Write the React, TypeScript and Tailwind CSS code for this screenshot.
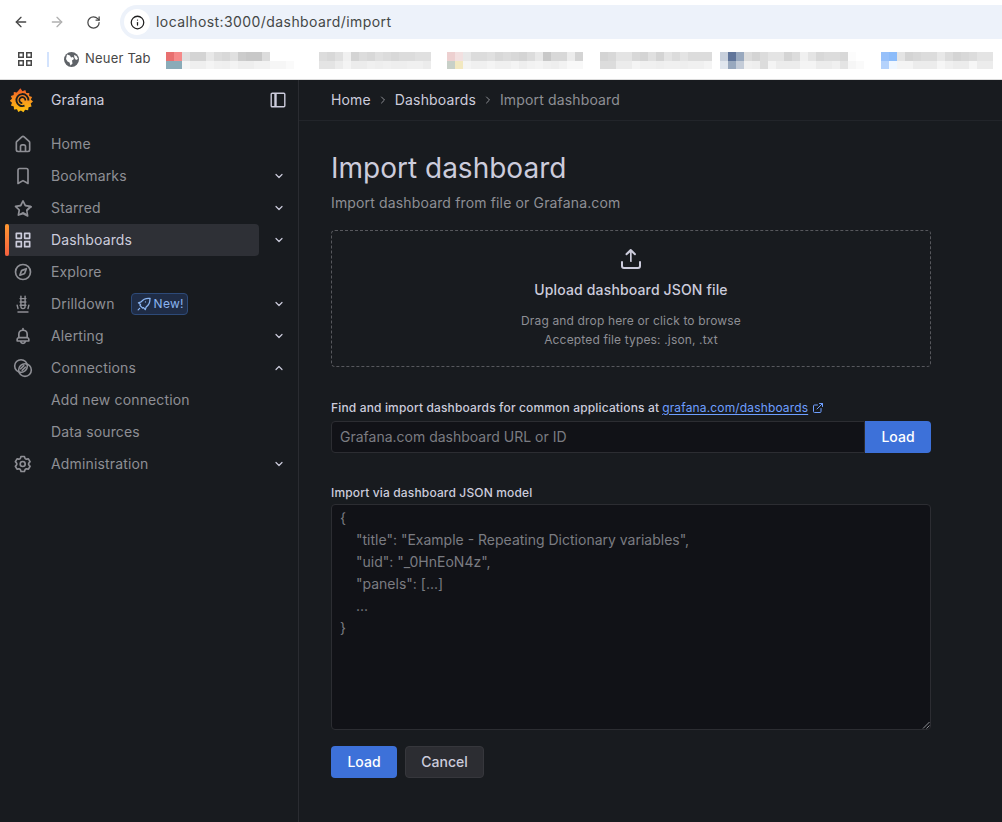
import React from "react";
import { ArrowLeft, ArrowRight, RotateCw, Info, ChevronDown, ChevronUp, ChevronRight, ExternalLink } from "lucide-react";

const mosaics: { x: number; top: string[]; bottom: string[] }[] = [
  { x: 166, top: ["#e87070", "#f58a8a", "#e0e0e0", "#d4d4d4", "#d4d4d4", "#e8e8e8", "#dcdcdc", "#d8d8d8", "#e0e0e0", "#cccccc", "#c8c8c8", "#c8c8c8", "#dcdcdc", "#ffffff", "#ffffff", "#ffffff", "#ffffff"], bottom: ["#8aabb8", "#8aabb8", "#f5f5f5", "#efefef", "#efefef", "#f4f4f4", "#f0f0f0", "#efefef", "#f3f3f3", "#eeeeee", "#eeeeee", "#f2f2f2", "#f2f2f2", "#f6f6f6", "#f6f6f6", "#fafafa", "#ffffff"] },
  { x: 319, top: ["#dcdcdc", "#d8d8d8", "#e0e0e0", "#f0f0f0", "#d4d4d4", "#dcdcdc", "#d8d8d8", "#e0e0e0", "#dcdcdc", "#d8d8d8", "#dcdcdc", "#dcdcdc", "#e0e0e0", "#e0e0e0"], bottom: ["#e4e4e4", "#e4e4e4", "#ececec", "#f4f4f4", "#ececec", "#ececec", "#f0f0f0", "#eeeeee", "#f0f0f0", "#eeeeee", "#eeeeee", "#f0f0f0", "#f0f0f0", "#ececec"] },
  { x: 447, top: ["#edd0d0", "#f2e0e0", "#e8e8e8", "#dcdcdc", "#dcdcdc", "#e0e0e0", "#d8d8d8", "#dcdcdc", "#d8d8d8", "#d4d4d4", "#dcdcdc", "#e8e8e8", "#c8c8c8", "#d8d8d8", "#d8d8d8", "#ececec", "#d4d4d4"], bottom: ["#c8d0c8", "#f2e8c0", "#f4f4f4", "#f0f0f0", "#f0f0f0", "#f4f4f4", "#f0f0f0", "#f0f0f0", "#f4f4f4", "#eeeeee", "#f2f2f2", "#f4f4f4", "#f0f0f0", "#eeeeee", "#f2f2f2", "#f8f8f8", "#f8f8f8"] },
  { x: 600, top: ["#d4d4d4", "#d8d8d8", "#e4e4e4", "#e4e4e4", "#d8d8d8", "#d4d4d4", "#e0e0e0", "#d4d4d4", "#e4e4e4", "#dcdcdc", "#e4e4e4", "#dcdcdc", "#dcdcdc", "#dcdcdc"], bottom: ["#dcdcdc", "#dcdcdc", "#ececec", "#ececec", "#f4f4f4", "#f0f0f0", "#f0f0f0", "#eeeeee", "#f0f0f0", "#f0f0f0", "#eeeeee", "#f0f0f0", "#f0f0f0", "#f4f4f4"] },
  { x: 720, top: ["#c8d0dc", "#60759a", "#98a8be", "#dcdcdc", "#d4d4d4", "#dcdcdc", "#e4e4e4", "#e4e4e4", "#d4d4d4", "#dcdcdc", "#f0f0f0", "#e4e4e4", "#d8d8d8", "#dcdcdc", "#dcdcdc", "#d8d8d8", "#fcfcfc", "#ffffff"], bottom: ["#e0e6ee", "#98a8be", "#c4ccd8", "#f0f0f0", "#eeeeee", "#dcdcdc", "#f4f4f4", "#ececec", "#ececec", "#ececec", "#f4f4f4", "#f4f4f4", "#ececec", "#ececec", "#f0f0f0", "#e4e4e4", "#f6f6f6", "#fafafa"] },
  { x: 881, top: ["#96c0fa", "#8cbcfa", "#e4e4e4", "#d4d4d4", "#d8d8d8", "#dcdcdc", "#dcdcdc", "#e8e8e8", "#dcdcdc", "#d4d4d4", "#d8d8d8", "#dcdcdc", "#e4e4e4", "#e4e4e4"], bottom: ["#b4d2fc", "#f0f7ff", "#f4f4f4", "#f4f4f4", "#ececec", "#ececec", "#ececec", "#f6f6f6", "#f0f0f0", "#ececec", "#ececec", "#f6f6f6", "#ececec", "#ececec"] },
];

function Mosaic({ m }: { m: (typeof mosaics)[number] }) {
  return (
    <svg width={m.top.length * 8} height={17} className="block shrink-0" style={{ marginLeft: m.x }}>
      {m.top.map((c, i) => (
        <rect key={i} x={i * 8} y={0} width={8} height={9} fill={c} />
      ))}
      {m.bottom.map((c, i) => (
        <rect key={i} x={i * 8} y={9} width={8} height={8} fill={c} />
      ))}
    </svg>
  );
}

const GrafanaLogo = () => (
  <svg width="24" height="26" viewBox="0 0 24 26" className="shrink-0">
    <defs>
      <linearGradient id="gf" x1="0.5" y1="1" x2="0.5" y2="0">
        <stop offset="0" stopColor="#fdc10e" />
        <stop offset="0.45" stopColor="#f99a1c" />
        <stop offset="1" stopColor="#f05a28" />
      </linearGradient>
    </defs>
    <path
      fill="url(#gf)"
      d="M10.4 1.2l2 3 2.9-1.1 1 3 3-.2-.1 3 2.9 1-1.3 2.7 2.2 2-2.3 2 .9 2.9-3 .7-.5 3-3-.5-1.7 2.5-2.5-1.7-2.6 1.500-1.300-2.700-3 .2-.2-3-2.900-.9 1.100-2.800-2.200-2.100 2.200-2-1.200-2.800 2.900-.9.1-3 3 .4z"
    />
    <path d="M18.4 13.500A6 6 0 1 0 14.500 18.700" fill="none" stroke="#181b1f" strokeWidth="1.9" />
    <path d="M15.300 13.500A3 3 0 1 0 12.300 16.100" fill="none" stroke="#181b1f" strokeWidth="1.700" />
  </svg>
);

const ico = { viewBox: "0 0 24 24", fill: "currentColor", width: 20, height: 20 } as const;
const HomeIcon = () => (
  <svg {...ico}>
    <path d="M20 8 14 2.74a3 3 0 0 0-4 0L4 8a3 3 0 0 0-1 2.26V19a3 3 0 0 0 3 3h12a3 3 0 0 0 3-3v-8.75A3 3 0 0 0 20 8Zm-6 12h-4v-5a1 1 0 0 1 1-1h2a1 1 0 0 1 1 1Zm5-1a1 1 0 0 1-1 1h-2v-5a3 3 0 0 0-3-3h-2a3 3 0 0 0-3 3v5H6a1 1 0 0 1-1-1v-8.75a1 1 0 0 1 .34-.75l6-5.25a1 1 0 0 1 1.32 0l6 5.25a1 1 0 0 1 .34.75Z" />
  </svg>
);
const BookmarkIcon = () => (
  <svg {...ico}>
    <path d="M16 2H8a3 3 0 0 0-3 3v16a1 1 0 0 0 1.5.87L12 18.69l5.5 3.18A1 1 0 0 0 19 21V5a3 3 0 0 0-3-3Zm1 17.27-4.5-2.6a1 1 0 0 0-1 0L7 19.27V5a1 1 0 0 1 1-1h8a1 1 0 0 1 1 1Z" />
  </svg>
);
const StarIcon = () => (
  <svg {...ico}>
    <path d="M22 9.67a1 1 0 0 0-.86-.67l-5.69-.83L12.9 3a1 1 0 0 0-1.8 0L8.55 8.16 2.86 9a1 1 0 0 0-.81.68 1 1 0 0 0 .25 1l4.13 4-1 5.68a1 1 0 0 0 1.45 1.07L12 19.76l5.1 2.68a.93.93 0 0 0 .46.12 1 1 0 0 0 .59-.19 1 1 0 0 0 .4-1l-1-5.68 4.13-4A1 1 0 0 0 22 9.67Zm-6.15 4a1 1 0 0 0-.29.89l.72 4.19-3.76-2a1 1 0 0 0-.94 0l-3.76 2 .72-4.19a1 1 0 0 0-.29-.89l-3-3 4.21-.61a1 1 0 0 0 .76-.55L12 5.7l1.88 3.82a1 1 0 0 0 .76.55l4.21.61Z" />
  </svg>
);
const AppsIcon = () => (
  <svg {...ico}>
    <path d="M10 13H4a1 1 0 0 0-1 1v6a1 1 0 0 0 1 1h6a1 1 0 0 0 1-1v-6a1 1 0 0 0-1-1Zm-1 6H5v-4h4ZM20 3h-6a1 1 0 0 0-1 1v6a1 1 0 0 0 1 1h6a1 1 0 0 0 1-1V4a1 1 0 0 0-1-1Zm-1 6h-4V5h4Zm1 4h-6a1 1 0 0 0-1 1v6a1 1 0 0 0 1 1h6a1 1 0 0 0 1-1v-6a1 1 0 0 0-1-1Zm-1 6h-4v-4h4ZM10 3H4a1 1 0 0 0-1 1v6a1 1 0 0 0 1 1h6a1 1 0 0 0 1-1V4a1 1 0 0 0-1-1ZM9 9H5V5h4Z" />
  </svg>
);
const CompassIcon = () => (
  <svg {...ico}>
    <path d="M12 2a10 10 0 1 0 10 10A10 10 0 0 0 12 2Zm0 18a8 8 0 1 1 8-8 8 8 0 0 1-8 8Z" />
    <path d="M15.6 7.1 10.4 9a2 2 0 0 0-1.2 1.2l-1.9 5.3a1 1 0 0 0 1.3 1.3l5.2-1.9a2 2 0 0 0 1.2-1.2l1.9-5.3a1 1 0 0 0-1.3-1.3Zm-2.4 5.8a.5.5 0 0 1-.3.3l-3 1.1 1.1-3a.5.5 0 0 1 .3-.3l3-1.1Z" />
  </svg>
);
const DrillIcon = () => (
  <svg width="20" height="20" viewBox="0 0 24 24" fill="none" stroke="currentColor" strokeWidth="1.7" strokeLinecap="round">
    <path d="M6 21.500h12" />
    <path d="M8.500 5.500h7M8.500 9.500h7M8.500 13.500h7" />
    <path d="M9.500 2.500v12.500a2.500 2.500 0 0 0 5 0V2.500" />
    <path d="M5 13.500l1 4M19 13.500l-1 4" />
  </svg>
);
const BellIcon = () => (
  <svg {...ico}>
    <path d="M18 13.18V10a6 6 0 0 0-5-5.91V3a1 1 0 0 0-2 0v1.09A6 6 0 0 0 6 10v3.18A3 3 0 0 0 4 16v2a1 1 0 0 0 1 1h3.14a4 4 0 0 0 7.72 0H19a1 1 0 0 0 1-1v-2a3 3 0 0 0-2-2.82ZM8 10a4 4 0 0 1 8 0v3H8Zm4 10a2 2 0 0 1-1.72-1h3.44A2 2 0 0 1 12 20Zm6-3H6v-1a1 1 0 0 1 1-1h10a1 1 0 0 1 1 1Z" />
  </svg>
);
const ConnIcon = () => (
  <svg width="20" height="20" viewBox="0 0 24 24" fill="none" stroke="currentColor" strokeWidth="1.9">
    <circle cx="9.6" cy="9.6" r="7.6" />
    <circle cx="14.4" cy="14.4" r="7.6" />
    <path d="M8.5 13.5l5-5M10.5 15.5l5-5" />
  </svg>
);
const CogIcon = () => (
  <svg {...ico}>
    <path d="M19.9 12.66a1 1 0 0 1 0-1.32l1.28-1.44a1 1 0 0 0 .12-1.17l-2-3.46a1 1 0 0 0-1.07-.48l-1.88.38a1 1 0 0 1-1.15-.66l-.61-1.83a1 1 0 0 0-.95-.68h-4a1 1 0 0 0-1 .68l-.56 1.83a1 1 0 0 1-1.15.66L5 4.79a1 1 0 0 0-1 .48L2 8.73a1 1 0 0 0 .1 1.17l1.27 1.44a1 1 0 0 1 0 1.32L2.1 14.1a1 1 0 0 0-.1 1.17l2 3.46a1 1 0 0 0 1.07.48l1.88-.38a1 1 0 0 1 1.15.66l.61 1.83a1 1 0 0 0 1 .68h4a1 1 0 0 0 .95-.68l.61-1.83a1 1 0 0 1 1.15-.66l1.88.38a1 1 0 0 0 1.07-.48l2-3.46a1 1 0 0 0-.12-1.17ZM18.41 14l.8.9-1.28 2.22-1.18-.24a3 3 0 0 0-3.45 2L12.92 20h-2.56L10 18.86a3 3 0 0 0-3.45-2l-1.18.24-1.3-2.21.8-.9a3 3 0 0 0 0-4l-.8-.9 1.28-2.2 1.18.24a3 3 0 0 0 3.45-2L10.36 4h2.56l.38 1.14a3 3 0 0 0 3.45 2l1.18-.24 1.28 2.22-.8.9a3 3 0 0 0 0 3.98Zm-6.77-6a4 4 0 1 0 4 4 4 4 0 0 0-4-4Zm0 6a2 2 0 1 1 2-2 2 2 0 0 1-2 2Z" />
  </svg>
);
const RocketIcon = () => (
  <svg width="14" height="14" viewBox="0 0 24 24" fill="none" stroke="currentColor" strokeWidth="2.2" strokeLinejoin="round" strokeLinecap="round" className="shrink-0">
    <path d="M22.5 2.5c-6.5-.8-12 1.2-15.5 6L2.5 10l3.5 3-.8 1.6 4.4 4.4 1.6-.8 3 3.5 1.5-4.5c4.800-3.500 7-8.500 6.300-14.700Z" />
    <path d="M14.500 8.500h.01" />
    <path d="M2 22l2.500-2.500" />
  </svg>
);

const items: { label: string; icon: React.ReactNode; chevron?: "down" | "up"; active?: boolean; badge?: boolean }[] = [
  { label: "Home", icon: <HomeIcon /> },
  { label: "Bookmarks", icon: <BookmarkIcon />, chevron: "down" },
  { label: "Starred", icon: <StarIcon />, chevron: "down" },
  { label: "Dashboards", icon: <AppsIcon />, chevron: "down", active: true },
  { label: "Explore", icon: <CompassIcon /> },
  { label: "Drilldown", icon: <DrillIcon />, chevron: "down", badge: true },
  { label: "Alerting", icon: <BellIcon />, chevron: "down" },
  { label: "Connections", icon: <ConnIcon />, chevron: "up" },
  { label: "Add new connection", icon: null },
  { label: "Data sources", icon: null },
  { label: "Administration", icon: <CogIcon />, chevron: "down" },
];

function NavRow({ item }: { item: (typeof items)[number] }) {
  return (
    <div className="flex h-8 items-center">
      <div className={`ml-[5px] flex h-8 w-[254px] items-center rounded-r-sm ${item.active ? "bg-[#2e3036] text-[#ccccdc]" : "text-[#8e8f95]"}`}>
        <div className={`h-8 w-1 shrink-0 rounded-sm ${item.active ? "bg-gradient-to-b from-[#ff9830] to-[#f55f3e]" : ""}`} />
        <div className="w-1 shrink-0" />
        <div className="flex w-[38px] shrink-0 items-center">{item.icon}</div>
        <span className="text-sm leading-none tracking-[0.15px]">{item.label}</span>
        {item.badge && (
          <span className="ml-[16px] flex h-[22px] w-[57px] items-center gap-[3px] rounded-sm border border-[#2d4a78] bg-[#1f2c45] pl-[5px] text-xs tracking-[0.3px] text-[#8ab4f0]">
            <RocketIcon />New!
          </span>
        )}
      </div>
      <div className="flex flex-1 items-center justify-center text-[#ccccdc]">
        {item.chevron === "down" && <ChevronDown size={12} strokeWidth={2.4} />}
        {item.chevron === "up" && <ChevronUp size={12} strokeWidth={2.4} />}
      </div>
    </div>
  );
}

export default function App() {
  return (
    <div className="flex h-[822px] w-[1002px] flex-col overflow-hidden bg-[#181b1f] text-[#ccccdc] [font-family:Inter,'Liberation_Sans',sans-serif]">
      {/* browser chrome */}
      <div className="relative h-[80px] shrink-0 border-b border-[#dcdcdc] bg-white">
        <div className="flex h-[44px] items-center">
          <div className="flex w-[120px] shrink-0 items-center pl-[13px] text-[#474747]">
            <ArrowLeft size={16} strokeWidth={2} />
            <ArrowRight size={16} strokeWidth={2} className="ml-[20px] text-[#b0b0b0]" />
            <RotateCw size={15} strokeWidth={2} className="ml-[21px]" />
          </div>
          <div className="flex h-[34px] flex-1 items-center rounded-l-[17px] bg-[#edf2fa] pl-[4px]">
            <div className="flex h-[26px] w-[26px] items-center justify-center rounded-full bg-white text-[#1f1f1f]">
              <Info size={15} strokeWidth={2} />
            </div>
            <span className="ml-[6px] text-sm tracking-[0.42px] text-[#444746]">localhost:3000/dashboard/import</span>
          </div>
        </div>
        <div className="flex h-[30px] items-center pl-[17px]">
          <svg width="16" height="16" viewBox="0 0 16 16" fill="none" stroke="#474747" strokeWidth="1.5">
            <rect x="1.75" y="1.75" width="4.5" height="4.5" />
            <rect x="9.75" y="1.75" width="4.5" height="4.5" />
            <rect x="1.75" y="9.75" width="4.5" height="4.5" />
            <rect x="9.75" y="9.75" width="4.5" height="4.5" />
          </svg>
          <div className="ml-[14px] h-[15px] w-[2px] bg-[#d3e3fd]" />
          <svg width="15" height="15" viewBox="0 0 15 15" className="ml-[15px]">
            <circle cx="7.5" cy="7.5" r="7.5" fill="#5f6368" />
            <path d="M3 2.5l3 1 1 2 2-.5 1 2-2 1.5.5 3-2 2-1-3-2-1-1.5-2.5zM10 3l2.5 1 1.500 3-2 1-1.500-2z" fill="#ffffff" />
          </svg>
          <span className="ml-[6px] text-[13px] tracking-[0.2px] text-[#474747]">Neuer Tab</span>
        </div>
        {mosaics.map((m) => (
          <div key={m.x} className="absolute left-0 top-[52px]"><Mosaic m={m} /></div>
        ))}
      </div>

      <div className="flex flex-1">
        {/* sidebar */}
        <aside className="w-[299px] shrink-0 border-r border-[#2a2c31]">
          <div className="flex h-10 items-center pl-[10px] pr-[12px]">
            <GrafanaLogo />
            <span className="ml-[17px] flex-1 text-sm tracking-[0.15px] text-[#ccccdc]">Grafana</span>
            <svg width="16" height="16" viewBox="0 0 16 16" fill="none" stroke="#ccccdc" strokeWidth="1.4">
              <rect x="1.2" y="1.2" width="13.6" height="13.6" rx="1" />
              <path d="M5.5 1.5v13" strokeWidth="2.4" />
            </svg>
          </div>
          <nav className="pt-2">
            {items.map((it) => <NavRow key={it.label} item={it} />)}
          </nav>
        </aside>

        {/* main */}
        <main className="flex-1">
          <div className="flex h-[41px] items-center gap-[5px] border-b border-[#22252a] pl-[32px] text-sm tracking-[0.15px]">
            <span className="text-[#ccccdc]">Home</span>
            <ChevronRight size={12} className="mx-[1px] text-[#8e8f95]" />
            <span className="text-[#ccccdc]">Dashboards</span>
            <ChevronRight size={12} className="mx-[1px] text-[#8e8f95]" />
            <span className="text-[#8e8f95]">Import dashboard</span>
          </div>
          <div className="ml-[32px] w-[600px]">
            <h1 className="mt-[30px] text-[28px] leading-[34px] font-normal text-[#ccccdc]">Import dashboard</h1>
            <p className="mt-[9px] text-sm leading-[18px] tracking-[0.15px] text-[#8e8f95]">Import dashboard from file or Grafana.com</p>

            <div className="mt-[18px] flex h-[137px] w-[600px] flex-col items-center rounded-sm border border-dashed border-[#57585d]">
              <svg width="24" height="24" viewBox="0 0 24 24" fill="#ccccdc" className="mt-[16px]">
                <path d="M21 14a1 1 0 0 0-1 1v4a1 1 0 0 1-1 1H5a1 1 0 0 1-1-1v-4a1 1 0 0 0-2 0v4a3 3 0 0 0 3 3h14a3 3 0 0 0 3-3v-4a1 1 0 0 0-1-1Zm-9.7.7a1 1 0 0 0 1.4 0l0 0V5.41l2.600 2.600a1 1 0 0 0 1.400-1.420l-4.300-4.300a1 1 0 0 0-1.400 0L6.700 6.600A1 1 0 0 0 8.100 8l2.900-2.600V14a1 1 0 0 0 .3.7Z" />
              </svg>
              <span className="mt-[8px] text-sm font-medium leading-[22px] tracking-[0.15px] text-[#ccccdc]">Upload dashboard JSON file</span>
              <span className="mt-[11px] text-xs leading-[18px] tracking-[0.15px] text-[#8e8f95]">Drag and drop here or click to browse</span>
              <span className="text-xs leading-[20px] tracking-[0.15px] text-[#8e8f95]">Accepted file types: .json, .txt</span>
            </div>

            <div className="mt-[32px] flex items-center text-xs font-medium leading-[18px] tracking-[0.15px] text-[#ccccdc]">
              <span>Find and import dashboards for common applications at</span>
              <span className="ml-[3px] font-normal text-[#6e9fff] underline underline-offset-2">grafana.com/dashboards</span>
              <ExternalLink size={12} className="ml-[4px] text-[#6e9fff]" />
            </div>
            <div className="mt-[4px] flex h-8">
              <div className="flex flex-1 items-center rounded-l-sm border border-[#2c2d32] bg-[#111217] pl-2 text-sm text-[#7b7c82]">Grafana.com dashboard URL or ID</div>
              <button className="h-8 w-[66px] rounded-r-sm bg-[#3d71d9] text-sm font-medium text-white">Load</button>
            </div>

            <div className="mt-[31px] text-xs font-medium leading-[18px] tracking-[0.15px] text-[#ccccdc]">Import via dashboard JSON model</div>
            <div className="relative mt-[2px] h-[226px] rounded-sm border border-[#2c2d32] bg-[#111217] px-2 pt-[2px] text-sm leading-[22px] text-[#7b7c82]">
              <div>{"{"}</div>
              <div className="pl-4">"title": "Example - Repeating Dictionary variables",</div>
              <div className="pl-4">"uid": "_0HnEoN4z",</div>
              <div className="pl-4">"panels": [...]</div>
              <div className="pl-4">...</div>
              <div>{"}"}</div>
              <svg width="8" height="8" viewBox="0 0 8 8" className="absolute bottom-0 right-0" stroke="#8e8f95" strokeWidth="1">
                <path d="M1 7.500 7.500 1M4.500 7.500l3-3" />
              </svg>
            </div>
            <div className="mt-4 flex gap-2">
              <button className="h-8 w-[66px] rounded-sm bg-[#3d71d9] text-sm font-medium text-white">Load</button>
              <button className="h-8 w-[79px] rounded-sm border border-[#36373c] bg-[#2c2d32] text-sm font-medium text-[#ccccdc]">Cancel</button>
            </div>
          </div>
        </main>
      </div>
    </div>
  );
}
